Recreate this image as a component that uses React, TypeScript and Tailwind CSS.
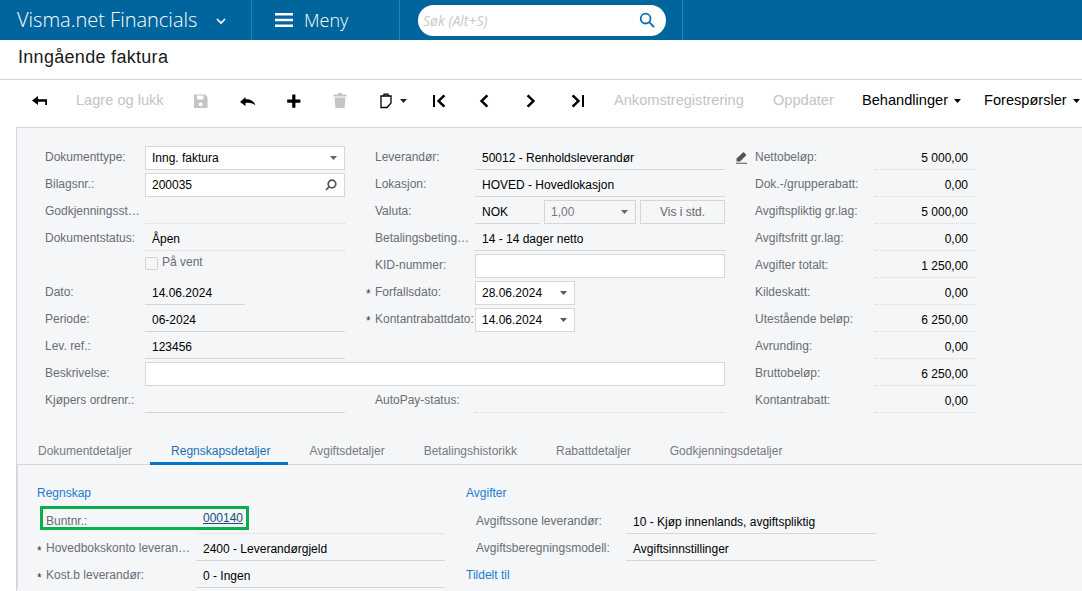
import React from 'react';

const arial = 'font-["Liberation_Sans",Arial,sans-serif]';

const Caret = ({ className = '' }: { className?: string }) => (
  <svg width="7" height="4" viewBox="0 0 7 4" className={className}><path d="M0 0h7L3.500 4z" fill="currentColor" /></svg>
);

const ToolIcon = ({ d, off }: { d: string; off?: boolean }) => (
  <svg width="16" height="16" viewBox="0 0 16 16" className={off ? 'text-[#c4c4c4]' : 'text-black'}><path d={d} fill="currentColor" /></svg>
);

const Label = ({ text, star }: { text: string; star?: boolean }) => (
  <div className="w-[100px] shrink-0 flex pt-[3px] text-[#6a6d73] leading-[16px] relative">
    {star && <span className="absolute left-[-9px] top-[5px] text-[#333]">*</span>}
    <span className="whitespace-nowrap">{text}</span>
  </div>
);

const Row = ({ label, star, children }: { label: string; star?: boolean; children?: React.ReactNode }) => (
  <div className="flex h-[24px] mb-[3px]">
    <Label text={label} star={star} />
    {children}
  </div>
);

const Plain = ({ text, w = 'w-full', dotted }: { text?: string; w?: string; dotted?: boolean }) => (
  <div className={`${w} h-[24px] px-[7px] pt-[3px] leading-[18px] text-black border-b border-[#d4d6d8] ${dotted ? 'border-dotted' : ''}`}>{text}</div>
);

const Box = ({ text, w = 'w-full', icon, muted }: { text?: string; w?: string; icon?: React.ReactNode; muted?: boolean }) => (
  <div className={`${w} h-[24px] flex items-center justify-between pl-[6px] pr-[7px] border border-[#d4d6d8] ${muted ? 'text-[#777]' : 'bg-white text-black'}`}>
    <span>{text}</span>
    {icon}
  </div>
);

const Amount = ({ label, value }: { label: string; value: string }) => (
  <div className="flex h-[24px] mb-[3px]">
    <div className="w-[120px] shrink-0 pt-[3px] leading-[16px] text-[#6a6d73]">{label}</div>
    <div className="w-[100px] h-[24px] pr-[7px] pt-[3px] leading-[18px] text-right text-black border-b border-dotted border-[#d4d6d8]">{value}</div>
  </div>
);

const tabs = ['Dokumentdetaljer', 'Regnskapsdetaljer', 'Avgiftsdetaljer', 'Betalingshistorikk', 'Rabattdetaljer', 'Godkjenningsdetaljer'];

export default function App() {
  return (
    <div className={`w-[1082px] h-[591px] overflow-hidden bg-white flex flex-col text-[12px] ${arial}`}>
      {/* top bar */}
      <div className="h-[40px] shrink-0 bg-[#00659c] flex text-white font-['Open_Sans',sans-serif]">
        <div className="w-[252px] flex items-center pl-[17px] border-r border-[#2b80b0]">
          <span className="text-[20px] font-light">Visma.net Financials</span>
          <svg width="10" height="7" viewBox="0 0 10 7" className="ml-[19px] mt-[2px]"><path d="M1 1l4 4 4-4" fill="none" stroke="white" strokeWidth="1.6" /></svg>
        </div>
        <div className="w-[148px] flex items-center pl-[22px] border-r border-[#2b80b0]">
          <svg width="20" height="14" viewBox="0 0 20 14"><path d="M1 0h18v2.600H1zM1 5.700h18v2.600H1zM1 11.400h18V14H1z" fill="white" /></svg>
          <span className="text-[18px] font-light ml-[10px]">Meny</span>
        </div>
        <div className="w-[283px] flex items-center pl-[18px] border-r border-[#2b80b0]">
          <div className="w-[248px] h-[31px] bg-white rounded-full flex items-center justify-between pl-[5px] pr-[11px]">
            <span className="text-[14px] italic text-[#c9c9c9]">Søk (Alt+S)</span>
            <svg width="16" height="16" viewBox="0 0 16 16" fill="none" stroke="#0a6fb8" strokeWidth="1.800"><circle cx="6.600" cy="6.600" r="4.900" /><path d="M10.200 10.200L15 15" /></svg>
          </div>
        </div>
      </div>

      {/* title */}
      <div className="h-[40px] shrink-0 border-b border-[#d5d5d5] pl-[18px] pt-[5px] text-[18px] tracking-[0.3px] leading-[24px] text-[#1a1a1a]">Inngående faktura</div>

      {/* toolbar */}
      <div className="h-[47px] shrink-0 flex items-center pb-[5px] text-[14.600px] whitespace-nowrap">
        <div className="w-[76px] pl-[32px] flex items-center">
          <ToolIcon d="M6 3L0 7.500 6 12V8.800h7.200V12H15V6.200H6z" />
        </div>
        <span className="w-[117px] text-[#c4c4c4]">Lagre og lukk</span>
        <div className="w-[47px] flex"><ToolIcon off d="M1 1.500h11L14.500 4v11H1zM4 2.500v4h6.500v-4zM7.700 9.200a2 2 0 100 4 2 2 0 000-4z" /></div>
        <div className="w-[46px] flex"><ToolIcon d="M0 9l5.500-5v2.300c4.500-.2 8.500 1.500 10 6.200-2.500-2.200-5.500-3-10-2.500V13z" /></div>
        <div className="w-[46px] flex"><ToolIcon d="M6.200 1.500h3.200v5h5v3.200h-5v5H6.200v-5h-5V6.500h5z" /></div>
        <div className="w-[48px] flex"><ToolIcon off d="M6 0h4v1.500h4.500v2h-13v-2H6zM2.500 4.500h11L12.500 15h-9z" /></div>
        <div className="w-[51px] flex items-center">
          <svg width="12" height="16" viewBox="0 0 12 16" fill="none" stroke="black" strokeWidth="1.300"><path d="M1 3h10v7l-4 4.500H1z" /><path d="M4 3V1.200h4V3" /></svg>
          <Caret className="ml-[8px] text-[#222]" />
        </div>
        <div className="w-[45px] flex"><ToolIcon d="M2 2h2v12H2zM12.500 1.500l1.800 1.700L9.300 8l5 4.800-1.800 1.700L5.800 8z" /></div>
        <div className="w-[47px] flex"><ToolIcon d="M10.500 1.500l1.800 1.700L7.300 8l5 4.800-1.800 1.700L3.800 8z" /></div>
        <div className="w-[47px] flex"><ToolIcon d="M5.500 1.500L3.700 3.200 8.700 8l-5 4.800 1.800 1.700L12.200 8z" /></div>
        <div className="w-[44px] flex"><ToolIcon d="M12 2h2v12h-2zM3.500 1.500L1.700 3.200 6.700 8l-5 4.800 1.800 1.700L10.200 8z" /></div>
        <span className="w-[159px] text-[#c4c4c4]">Ankomstregistrering</span>
        <span className="w-[89px] text-[#c4c4c4]">Oppdater</span>
        <span className="text-black flex items-center w-[122px]">Behandlinger<Caret className="ml-[6px]" /></span>
        <span className="text-black flex items-center">Forespørsler<Caret className="ml-[6px]" /></span>
      </div>

      {/* form + tabs */}
      <div className="ml-[16px] flex-1 bg-[#f4f6f8] border-t border-l border-[#d5d7da] flex flex-col min-h-0">
        <div className="flex pl-[28px] pt-[18px] h-[310px] shrink-0">
          <div className="w-[700px] shrink-0">
            <div className="flex">
              <div className="w-[330px]">
                <div className="w-[300px]">
                  <Row label="Dokumenttype:"><Box text="Inng. faktura" icon={<Caret className="text-[#666]" />} /></Row>
                  <Row label="Bilagsnr.:">
                    <Box text="200035" icon={<svg width="12" height="12" viewBox="0 0 12 12" fill="none" stroke="#555" strokeWidth="1.700"><circle cx="7" cy="5" r="3.800" /><path d="M4.300 7.700L1 11" /></svg>} />
                  </Row>
                  <Row label="Godkjenningsst…"><Plain dotted /></Row>
                  <Row label="Dokumentstatus:"><Plain text="Åpen" dotted /></Row>
                  <div className="flex h-[24px] mb-[3px] pl-[100px] pt-[3px]">
                    <span className="w-[13px] h-[13px] border border-[#cfd1d3] rounded-[2px] bg-[#f4f6f8]" />
                    <span className="ml-[4px] -mt-[3px] text-[#6a6d73] leading-[16px]">På vent</span>
                  </div>
                  <Row label="Dato:"><Plain text="14.06.2024" w="w-[100px]" /></Row>
                  <Row label="Periode:"><Plain text="06-2024" /></Row>
                  <Row label="Lev. ref.:"><Plain text="123456" /></Row>
                </div>
              </div>
              <div className="w-[350px]">
                <Row label="Leverandør:"><Plain text="50012 - Renholdsleverandør" /></Row>
                <Row label="Lokasjon:"><Plain text="HOVED - Hovedlokasjon" /></Row>
                <Row label="Valuta:">
                  <Plain text="NOK" w="w-[65px]" />
                  <Box text="1,00" w="w-[92px] ml-[4px]" muted icon={<Caret className="text-[#666]" />} />
                  <div className="w-[85px] ml-[4px] h-[24px] border border-[#d4d6d8] text-[#666] flex items-center justify-center">Vis i std.</div>
                </Row>
                <Row label="Betalingsbeting…"><Plain text="14 - 14 dager netto" /></Row>
                <Row label="KID-nummer:"><Box /></Row>
                <Row label="Forfallsdato:" star><Box text="28.06.2024" w="w-[100px]" icon={<Caret className="text-[#555]" />} /></Row>
                <Row label="Kontantrabattdato:" star><Box text="14.06.2024" w="w-[100px]" icon={<Caret className="text-[#555]" />} /></Row>
              </div>
            </div>
            <Row label="Beskrivelse:"><div className="w-[580px]"><Box /></div></Row>
            <div className="flex">
              <div className="w-[330px]"><div className="w-[300px]"><Row label="Kjøpers ordrenr.:"><Plain /></Row></div></div>
              <div className="w-[350px]"><Row label="AutoPay-status:"><Plain dotted /></Row></div>
            </div>
          </div>
          <div className="relative w-[250px]">
            <svg width="13" height="13" viewBox="0 0 13 13" className="absolute left-[-10px] top-[5px]"><path d="M8.500 1l3 3-6.500 6.500H1.500V7.500zM1 11.800h11v1H1z" fill="#555" /></svg>
            <div className="pl-[10px]">
              <Amount label="Nettobeløp:" value="5 000,00" />
              <Amount label="Dok.-/grupperabatt:" value="0,00" />
              <Amount label="Avgiftspliktig gr.lag:" value="5 000,00" />
              <Amount label="Avgiftsfritt gr.lag:" value="0,00" />
              <Amount label="Avgifter totalt:" value="1 250,00" />
              <Amount label="Kildeskatt:" value="0,00" />
              <Amount label="Utestående beløp:" value="6 250,00" />
              <Amount label="Avrunding:" value="0,00" />
              <Amount label="Bruttobeløp:" value="6 250,00" />
              <Amount label="Kontantrabatt:" value="0,00" />
            </div>
          </div>
        </div>

        {/* tabs */}
        <div className="h-[27px] shrink-0 flex border-b border-[#d5d7da] pl-[1.500px]">
          {tabs.map((t, i) => (
            <div key={t} className={`h-[27px] pt-[5px] leading-[16px] whitespace-nowrap ${i === 1 ? 'pl-[21px] pr-[18px] -ml-[1.500px] mr-[1.500px] text-[#1a6fb5] border-b-[3px] border-[#0a74c4]' : 'px-[19.500px] text-[#777a80]'}`}>{t}</div>
          ))}
        </div>

        <div className="flex pl-[19px] pt-[20px] border-l-2 border-[#d5d7da] -ml-px">
          <div className="w-[429px] shrink-0">
            <div className="text-[#1a7ccc] leading-[16px] mb-[9px]">Regnskap</div>
            <div className="relative pl-[9px]">
              <div className="absolute left-[3px] top-[-4px] w-[209px] h-[24px] border-[3px] border-[#0bad4e]" />
              <div className="flex h-[24px] mb-[3px]">
                <div className="w-[150px] shrink-0 pt-[3px] leading-[16px] text-[#6a6d73]">Buntnr.:</div>
                <div className="w-[249px] h-[24px] border-b border-dotted border-[#d4d6d8] px-[7px] leading-[16px]"><span className="underline text-[#17507f]">000140</span></div>
              </div>
              <div className="flex h-[24px] mb-[3px] relative">
                <span className="absolute left-[-9px] top-[5px] text-[#333]">*</span>
                <div className="w-[150px] shrink-0 pt-[3px] leading-[16px] text-[#6a6d73] whitespace-nowrap">Hovedbokskonto leveran…</div>
                <Plain text="2400 - Leverandørgjeld" w="w-[249px]" />
              </div>
              <div className="flex h-[24px] relative">
                <span className="absolute left-[-9px] top-[5px] text-[#333]">*</span>
                <div className="w-[150px] shrink-0 pt-[3px] leading-[16px] text-[#6a6d73]">Kost.b leverandør:</div>
                <Plain text="0 - Ingen" w="w-[249px]" />
              </div>
            </div>
          </div>
          <div>
            <div className="text-[#1a7ccc] leading-[16px] mb-[9px]">Avgifter</div>
            <div className="pl-[10px]">
              <div className="flex h-[24px] mb-[3px]">
                <div className="w-[150px] shrink-0 pt-[3px] leading-[16px] text-[#6a6d73]">Avgiftssone leverandør:</div>
                <Plain text="10 - Kjøp innenlands, avgiftspliktig" w="w-[250px]" />
              </div>
              <div className="flex h-[24px] mb-[2px]">
                <div className="w-[150px] shrink-0 pt-[3px] leading-[16px] text-[#6a6d73]">Avgiftsberegningsmodell:</div>
                <Plain text="Avgiftsinnstillinger" w="w-[250px]" />
              </div>
            </div>
            <div className="text-[#1a7ccc] leading-[16px] mt-[6px]">Tildelt til</div>
          </div>
        </div>
      </div>
    </div>
  );
}
